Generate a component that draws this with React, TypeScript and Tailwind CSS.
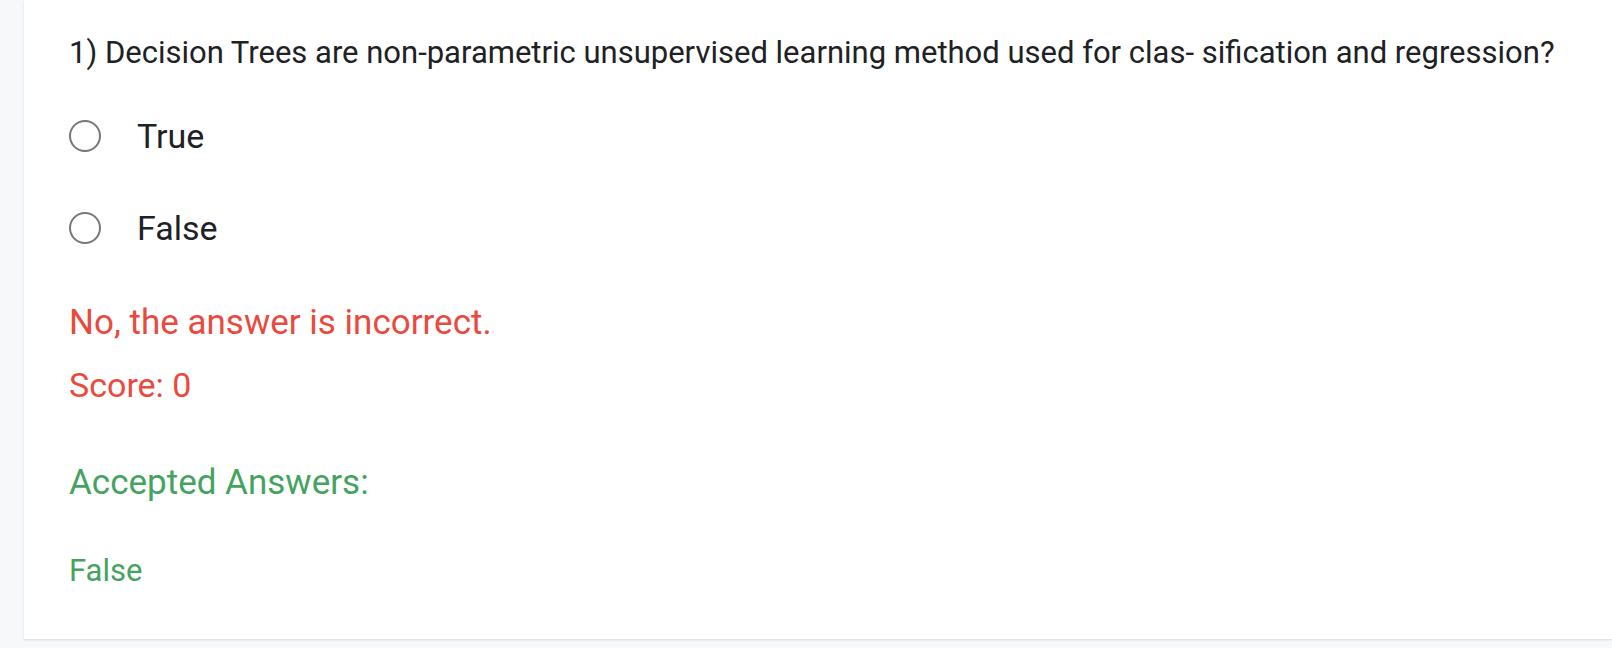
const options = ["True", "False"];

function Radio() {
  return (
    <span className="inline-block h-[32px] w-[32px] shrink-0 rounded-full border-[2.5px] border-[#777777] bg-white" />
  );
}

export default function App() {
  return (
    <div className="min-h-[648px] bg-[#f7f8fa] font-['Roboto',sans-serif]">
      <div className="ml-[24px] bg-white pb-[48px] pl-[45px] pt-[33px] shadow-[0_1px_2px_rgba(0,0,0,0.12)]">
        <p className="text-[31px] leading-[40px] text-[#202124]">
          1) Decision Trees are non-parametric unsupervised learning method used for clas- sification and regression?
        </p>

        <div className="mt-[17px]">
          {options.map((opt) => (
            <label key={opt} className="flex h-[92px] items-center gap-[36px]">
              <Radio />
              <span className="text-[34px] leading-[40px] text-[#202124]">{opt}</span>
            </label>
          ))}
        </div>

        <p className="mt-[29px] text-[35px] leading-[40px] text-[#ea4a3d]">No, the answer is incorrect.</p>
        <p className="mt-[22px] text-[34px] leading-[40px] text-[#ea4a3d]">Score: 0</p>

        <p className="mt-[58px] text-[35px] leading-[40px] text-[#45a360]">Accepted Answers:</p>
        <p className="mt-[48px] text-[31px] leading-[40px] text-[#45a360]">False</p>
      </div>
    </div>
  );
}
